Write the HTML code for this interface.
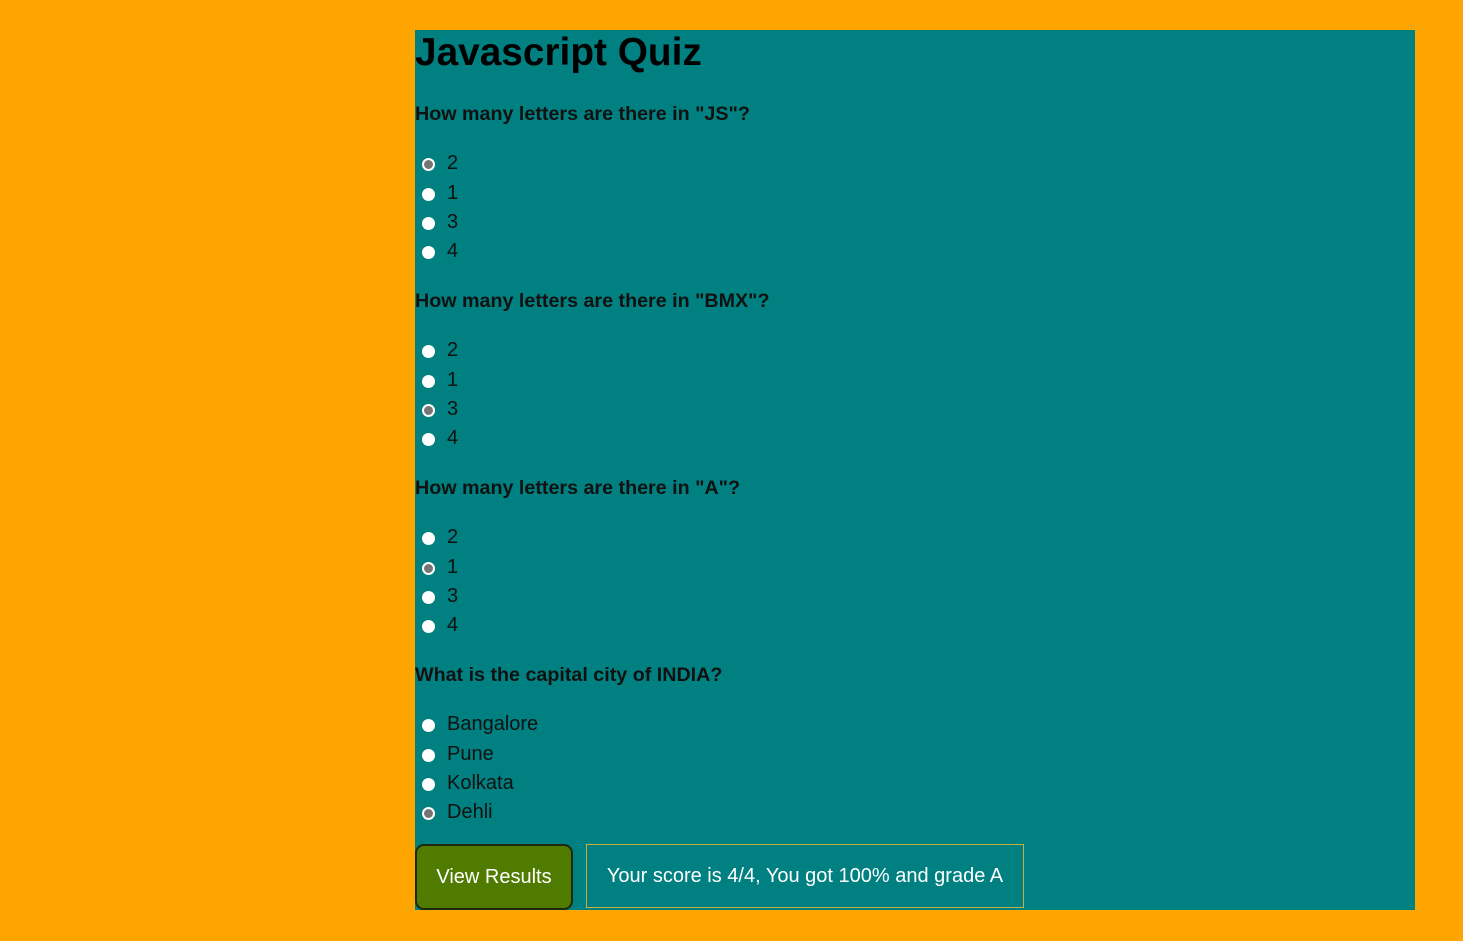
<!DOCTYPE html>
<html><head><style>
body{margin:0;background:#ffa500;width:1463px;height:941px;position:relative;font-family:"Liberation Sans",Arial,sans-serif;overflow:hidden}
#c{position:absolute;left:415px;top:30px;width:1000px;height:880px;background:#008080}
.a{position:absolute;white-space:nowrap}
h1{position:absolute;left:0;top:1px;margin:0;font-size:38.8px;line-height:44px;color:#000;font-weight:bold}
.q{font-weight:bold;font-size:19.7px;color:#111;left:0;line-height:24px;margin-top:1px}
.o{font-size:20px;color:#111;left:32px;line-height:24px;margin-top:1px}
.r{position:absolute;left:7px;width:13px;height:13px;border-radius:50%;background:#fff;box-sizing:border-box;margin-top:1px}
.r.k{background:#757575;border:2.5px solid #fff}
#b{position:absolute;left:0;top:814px;width:158px;height:66px;box-sizing:border-box;background:#4f7b00;border:2px solid #1e2a10;border-radius:9px;color:#fff;font-size:20px;text-align:center;line-height:62px}
#s{position:absolute;left:171px;top:814px;width:438px;height:64px;box-sizing:border-box;border:1px solid #c8b040;color:#fff;font-size:20px;text-align:center;line-height:62px}
</style></head><body>
<div id="c">
<h1>Javascript Quiz</h1>
<div class="a q" style="top:71px">How many letters are there in "JS"?</div>
<div class="r k" style="top:127px"></div><div class="a o" style="top:120px">2</div>
<div class="r" style="top:157px"></div><div class="a o" style="top:150px">1</div>
<div class="r" style="top:186px"></div><div class="a o" style="top:179px">3</div>
<div class="r" style="top:215px"></div><div class="a o" style="top:208px">4</div>

<div class="a q" style="top:258px">How many letters are there in "BMX"?</div>
<div class="r" style="top:314px"></div><div class="a o" style="top:307px">2</div>
<div class="r" style="top:344px"></div><div class="a o" style="top:337px">1</div>
<div class="r k" style="top:373px"></div><div class="a o" style="top:366px">3</div>
<div class="r" style="top:402px"></div><div class="a o" style="top:395px">4</div>

<div class="a q" style="top:445px">How many letters are there in "A"?</div>
<div class="r" style="top:501px"></div><div class="a o" style="top:494px">2</div>
<div class="r k" style="top:531px"></div><div class="a o" style="top:524px">1</div>
<div class="r" style="top:560px"></div><div class="a o" style="top:553px">3</div>
<div class="r" style="top:589px"></div><div class="a o" style="top:582px">4</div>

<div class="a q" style="top:632px">What is the capital city of INDIA?</div>
<div class="r" style="top:688px"></div><div class="a o" style="top:681px">Bangalore</div>
<div class="r" style="top:718px"></div><div class="a o" style="top:711px">Pune</div>
<div class="r" style="top:747px"></div><div class="a o" style="top:740px">Kolkata</div>
<div class="r k" style="top:776px"></div><div class="a o" style="top:769px">Dehli</div>

<div id="b">View Results</div>
<div id="s">Your score is 4/4, You got 100% and grade A</div>
</div>
</body></html>
